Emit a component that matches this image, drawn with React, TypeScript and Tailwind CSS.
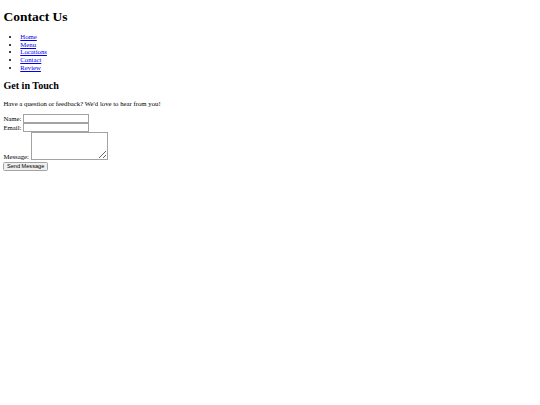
import React from "react";

const links = ["Home", "Menu", "Locations", "Contact", "Review"];

export default function App() {
  return (
    <div className="m-[3.4px] font-['Liberation_Serif',_'Times_New_Roman',_serif] text-[6.75px] leading-[7.7px] text-black">
      <h1 className="my-[9px] text-[13.5px] leading-[15px] font-bold">Contact Us</h1>

      <ul className="my-[6.75px] list-disc pl-[16.9px]">
        {links.map((label) => (
          <li key={label}>
            <a href="#" className="text-[#0000ee] underline">
              {label}
            </a>
          </li>
        ))}
      </ul>

      <h2 className="my-[8.4px] text-[10.1px] leading-[11.5px] font-bold">Get in Touch</h2>
      <p className="my-[6.75px]">Have a question or feedback? We'd love to hear from you!</p>

      <form className="leading-[9px]">
        <label htmlFor="name">Name:</label>{" "}
        <input
          id="name"
          type="text"
          className="h-[8.5px] w-[66px] border border-[#a3a3a3] bg-white px-[1px] align-top text-[5.6px]"
        />
        <br />
        <label htmlFor="email">Email:</label>{" "}
        <input
          id="email"
          type="email"
          className="h-[8.5px] w-[66px] border border-[#a3a3a3] bg-white px-[1px] align-top text-[5.6px]"
        />
        <br />
        <label htmlFor="message">Message:</label>{" "}
        <textarea
          id="message"
          className="h-[28px] w-[77px] border border-[#a3a3a3] bg-white p-[1px] align-[-1.5px] text-[5.6px] leading-[7px]"
        />
        <br />
        <button
          type="submit"
          className="mt-[1px] h-[9px] w-[44.5px] rounded-[1.5px] border border-[#a3a3a3] bg-[#efefef] align-top font-['Liberation_Sans',_Arial,_sans-serif] text-[5.6px] leading-[7px] text-black"
        >
          Send Message
        </button>
      </form>
    </div>
  );
}
